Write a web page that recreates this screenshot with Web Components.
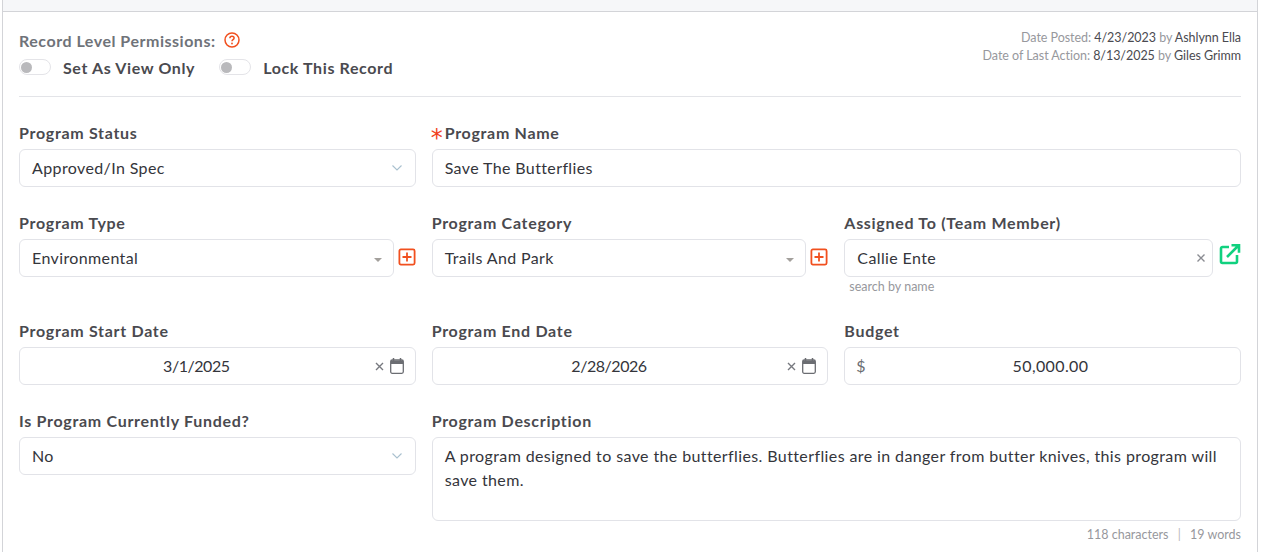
<!DOCTYPE html>
<html lang="en">
<head>
<meta charset="utf-8">
<title>Program</title>
<style>
  html, body { margin: 0; padding: 0; background: #fff; overflow: hidden; }
  body { font-family: Lato, "Noto Sans", sans-serif; color: #3f4254; height: 552px; }
</style>
</head>
<body>
<template id="field-tpl">
  <style>
    :host { display: block; min-width: 0; }
    .label { font-size: 16px; font-weight: 700; letter-spacing: .7px; line-height: 20px; color: #4a4a4f; height: 20px; margin-bottom: 6px; white-space: nowrap; display: flex; align-items: center; }
    .req { color: #f1411d; font-family: "DejaVu Sans", sans-serif; font-size: 24px; font-weight: 400; width: 14px; margin-left: -1px; line-height: 20px; height: 20px; letter-spacing: 0; padding-top: 5px; box-sizing: border-box; }
    .req[hidden] { display: none; }
  </style>
  <div class="label"><span class="req" hidden>*</span><span class="txt"></span></div>
  <slot></slot>
</template>

<template id="box-tpl">
  <style>
    :host { display: flex; align-items: center; gap: 4px; }
    .box { flex: 1; min-width: 0; box-sizing: border-box; height: 38px; border: 1px solid #e2e3e8; border-radius: 6px; background: #fff; display: flex; align-items: center; padding: 0 12px; font-size: 16px; letter-spacing: .38px; color: #34353b; }
    .val { flex: 1; white-space: nowrap; margin-bottom: 2px; }
    :host([center]) .val { text-align: center; }
    .trail { display: flex; align-items: center; }
  </style>
  <div class="box"><slot name="lead"></slot><span class="val"><slot></slot></span><span class="trail"><slot name="trail"></slot></span></div>
  <slot name="after"></slot>
</template>

<template id="toggle-tpl">
  <style>
    :host { display: inline-flex; align-items: center; gap: 12px; font-size: 16px; font-weight: 700; letter-spacing: .62px; color: #4a4a4f; }
    .sw { width: 32px; height: 16px; box-sizing: border-box; border: 1px solid #e4e4e8; border-radius: 8px; display: flex; align-items: center; padding-left: 1px; }
    .sw i { width: 11px; height: 11px; border-radius: 50%; background: #b9b9bc; display: block; }
  </style>
  <span class="sw"><i></i></span><slot></slot>
</template>

<template id="date-tpl">
  <style>
    :host { display: flex; align-items: center; gap: 6px; margin-right: -1px; }
    svg { display: block; }
  </style>
  <svg width="9" height="9" viewBox="0 0 9 9" fill="none"><path d="M1 1l7 7M8 1 1 8" stroke="#77797f" stroke-width="1.4"/></svg>
  <svg width="14" height="16" viewBox="0 0 14 16" fill="none"><rect x=".7" y="2" width="12.6" height="13.3" rx="1.5" stroke="#6b6d72" stroke-width="1.3"/><path d="M1 2.500h12V6H1z" fill="#6b6d72"/><path d="M3.500 0v3M10.500 0v3" stroke="#6b6d72" stroke-width="1.5"/></svg>
</template>

<template id="form-tpl">
  <style>
    :host { display: block; box-sizing: border-box; margin-left: 2px; width: 1256px; height: 552px; border-left: 1px solid #d3d4d8; border-right: 1px solid #d3d4d8; }
    .top { height: 11px; background: #f6f7f9; border-bottom: 1px solid #d3d4d8; }
    .body { padding: 0 16px; }
    .head { display: flex; justify-content: space-between; height: 85px; border-bottom: 1px solid #e3e4e8; box-sizing: border-box; }
    .perm { padding-top: 18px; }
    .perm-title { display: flex; align-items: center; gap: 8px; height: 20px; font-size: 16px; font-weight: 700; letter-spacing: .52px; color: #6f7379; }
    .toggles { display: flex; gap: 24px; margin-top: 7px; height: 20px; align-items: center; }
    .meta { text-align: right; font-size: 12.5px; line-height: 18px; color: #97989d; padding-top: 17px; letter-spacing: -.04px; }
    .meta b { font-weight: 400; color: #4a4a50; }
    .grid { display: grid; grid-template-columns: repeat(3, minmax(0, 1fr)); column-gap: 16px; padding-top: 26px; }
    .r1 { height: 90px; }
    .r2 { height: 108px; }
    .r3 { height: 90px; }
    .span2 { grid-column: span 2; }
    .hint { font-size: 12.5px; color: #97989d; margin: 2px 0 0 5px; line-height: 16px; }
    .area { box-sizing: border-box; height: 84px; border: 1px solid #e2e3e8; border-radius: 6px; padding: 6px 12px; font-size: 16px; letter-spacing: .39px; line-height: 24px; color: #34353b; }
    .count { text-align: right; font-size: 12.5px; color: #97989d; margin-top: 6px; line-height: 16px; }
    .count span { margin: 0 6px; color: #b9b9bc; }
    .date { padding-right: 14px; display: block; letter-spacing: -.45px; }
    .caret { margin: 3px -1px 0 0; }
    .chev { margin-top: -1px; }
    .add { margin-top: -2px; }
  </style>
  <div class="top"></div>
  <div class="body">
    <div class="head">
      <div class="perm">
        <div class="perm-title">Record Level Permissions:
          <svg width="16" height="16" viewBox="0 0 16 16" fill="none"><circle cx="8" cy="8" r="7" stroke="#f1501f" stroke-width="1.5"/><path d="M5.900 6.200c0-1.200 1-2 2.100-2s2.100.8 2.100 1.900c0 1.600-2.100 1.600-2.100 3.200" stroke="#f1501f" stroke-width="1.5" fill="none"/><circle cx="8" cy="11.500" r=".9" fill="#f1501f"/></svg>
        </div>
        <div class="toggles">
          <x-toggle>Set As View Only</x-toggle>
          <x-toggle>Lock This Record</x-toggle>
        </div>
      </div>
      <div class="meta">
        <div>Date Posted: <b>4/23/2023</b> by <b>Ashlynn Ella</b></div>
        <div>Date of Last Action: <b>8/13/2025</b> by <b>Giles Grimm</b></div>
      </div>
    </div>
    <div class="grid">
      <x-field class="r1" label="Program Status"><x-box>Approved/In Spec<svg class="chev" slot="trail" width="12" height="8" viewBox="0 0 12 8" fill="none"><path d="M1.500 1.500 6 6l4.500-4.500" stroke="#a9c0cf" stroke-width="1.1"/></svg></x-box></x-field>
      <x-field class="r1 span2" label="Program Name" required><x-box>Save The Butterflies</x-box></x-field>

      <x-field class="r2" label="Program Type"><x-box>Environmental<svg class="caret" slot="trail" width="8" height="4" viewBox="0 0 8 4"><path d="M0 0h8L4 4z" fill="#a3a09c"/></svg><svg class="add" slot="after" width="18" height="18" viewBox="0 0 18 18" fill="none"><rect x="1.400" y="1.400" width="15.200" height="15.200" rx="1.500" stroke="#f1501f" stroke-width="1.8"/><path d="M9 4.500v9M4.500 9h9" stroke="#f1501f" stroke-width="1.8"/></svg></x-box></x-field>
      <x-field class="r2" label="Program Category"><x-box>Trails And Park<svg class="caret" slot="trail" width="8" height="4" viewBox="0 0 8 4"><path d="M0 0h8L4 4z" fill="#a3a09c"/></svg><svg class="add" slot="after" width="18" height="18" viewBox="0 0 18 18" fill="none"><rect x="1.400" y="1.400" width="15.200" height="15.200" rx="1.500" stroke="#f1501f" stroke-width="1.8"/><path d="M9 4.500v9M4.500 9h9" stroke="#f1501f" stroke-width="1.8"/></svg></x-box></x-field>
      <x-field class="r2" label="Assigned To (Team Member)"><x-box>Callie Ente<svg slot="trail" width="10" height="10" viewBox="0 0 10 10" fill="none" style="margin-right:-6px"><path d="M1.500 1.500l7 7M8.500 1.500l-7 7" stroke="#8a8c92" stroke-width="1.4"/></svg><svg slot="after" width="22" height="22" viewBox="0 0 22 22" fill="none" style="margin:-8px 0 0 2px"><path d="M10 4H3.500A1.500 1.500 0 0 0 2 5.500V18.500A1.500 1.500 0 0 0 3.500 20H16.500A1.500 1.500 0 0 0 18 18.500V12" stroke="#10d17f" stroke-width="2.6"/><path d="M8 14 19 3M12.500 2.300H20v7.500" stroke="#10d17f" stroke-width="2.6"/></svg></x-box><div class="hint">search by name</div></x-field>

      <x-field class="r3" label="Program Start Date"><x-box center><span class="date">3/1/2025</span><x-date-tools slot="trail"></x-date-tools></x-box></x-field>
      <x-field class="r3" label="Program End Date"><x-box center><span class="date">2/28/2026</span><x-date-tools slot="trail"></x-date-tools></x-box></x-field>
      <x-field class="r3" label="Budget"><x-box center><span slot="lead" style="color:#6b6d72;margin:0 7px 2px -1px">$</span>50,000.00</x-box></x-field>

      <x-field label="Is Program Currently Funded?"><x-box>No<svg class="chev" slot="trail" width="12" height="8" viewBox="0 0 12 8" fill="none"><path d="M1.500 1.500 6 6l4.500-4.500" stroke="#a9c0cf" stroke-width="1.1"/></svg></x-box></x-field>
      <x-field class="span2" label="Program Description">
        <div class="area">A program designed to save the butterflies. Butterflies are in danger from butter knives, this program will save them.</div>
        <div class="count">118 characters <span>|</span> 19 words</div>
      </x-field>
    </div>
  </div>
</template>

<x-form></x-form>

<script>
  // Small helper: every element here just clones its own template.
  function shadowFrom(el, id) {
    const root = el.attachShadow({ mode: 'open' });
    root.appendChild(document.getElementById(id).content.cloneNode(true));
    return root;
  }

  class XField extends HTMLElement {
    constructor() {
      super();
      shadowFrom(this, 'field-tpl');
    }
    connectedCallback() {
      this.shadowRoot.querySelector('.txt').textContent = this.getAttribute('label');
      this.shadowRoot.querySelector('.req').hidden = !this.hasAttribute('required');
    }
  }

  class XBox extends HTMLElement {
    constructor() {
      super();
      shadowFrom(this, 'box-tpl');
    }
  }

  class XToggle extends HTMLElement {
    constructor() {
      super();
      shadowFrom(this, 'toggle-tpl');
    }
  }

  class XDateTools extends HTMLElement {
    constructor() {
      super();
      shadowFrom(this, 'date-tpl');
    }
  }

  class XForm extends HTMLElement {
    constructor() {
      super();
      shadowFrom(this, 'form-tpl');
    }
  }

  customElements.define('x-field', XField);
  customElements.define('x-box', XBox);
  customElements.define('x-toggle', XToggle);
  customElements.define('x-date-tools', XDateTools);
  customElements.define('x-form', XForm);
</script>
</body>
</html>
